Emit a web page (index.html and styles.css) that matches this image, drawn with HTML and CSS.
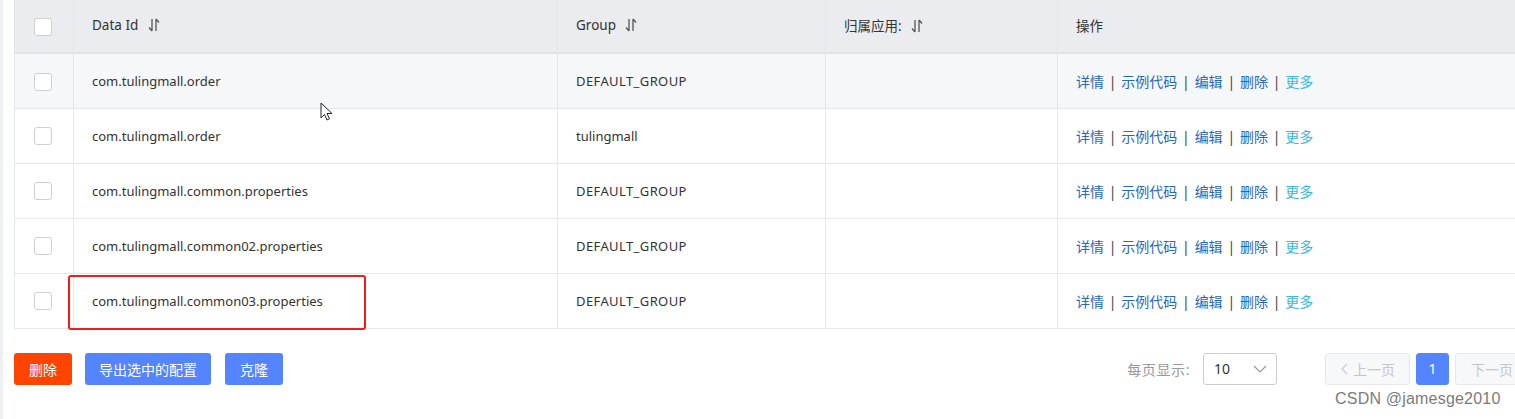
FILE: index.html
```html
<!DOCTYPE html>
<html lang="zh-CN">
<head>
<meta charset="utf-8">
<title>配置列表</title>
<link rel="stylesheet" href="styles.css">
</head>
<body>
<div class="page">
  <div class="table-wrap">
    <table class="grid">
      <colgroup>
        <col class="c-check"><col class="c-id"><col class="c-group"><col class="c-app"><col class="c-op">
      </colgroup>
      <thead>
        <tr>
          <th class="check-cell"><span class="checkbox"></span></th>
          <th>Data Id <svg class="sort" viewBox="0 0 12 14" width="12" height="14"><path d="M4 1v12M4 13L1 9.5M8 13V1M8 1l3 3.5" fill="none" stroke="#555" stroke-width="1.3"/></svg></th>
          <th>Group <svg class="sort" viewBox="0 0 12 14" width="12" height="14"><path d="M4 1v12M4 13L1 9.5M8 13V1M8 1l3 3.5" fill="none" stroke="#555" stroke-width="1.3"/></svg></th>
          <th>归属应用: <svg class="sort" viewBox="0 0 12 14" width="12" height="14"><path d="M4 1v12M4 13L1 9.5M8 13V1M8 1l3 3.5" fill="none" stroke="#555" stroke-width="1.3"/></svg></th>
          <th>操作</th>
        </tr>
      </thead>
      <tbody>
        <tr class="hover">
          <td class="check-cell"><span class="checkbox"></span></td>
          <td>com.tulingmall.order</td>
          <td class="grp">DEFAULT_GROUP</td>
          <td></td>
          <td class="ops"><a>详情</a><i>|</i><a>示例代码</a><i>|</i><a>编辑</a><i>|</i><a>删除</a><i>|</i><a class="more">更多</a></td>
        </tr>
        <tr>
          <td class="check-cell"><span class="checkbox"></span></td>
          <td>com.tulingmall.order</td>
          <td>tulingmall</td>
          <td></td>
          <td class="ops"><a>详情</a><i>|</i><a>示例代码</a><i>|</i><a>编辑</a><i>|</i><a>删除</a><i>|</i><a class="more">更多</a></td>
        </tr>
        <tr>
          <td class="check-cell"><span class="checkbox"></span></td>
          <td>com.tulingmall.common.properties</td>
          <td class="grp">DEFAULT_GROUP</td>
          <td></td>
          <td class="ops"><a>详情</a><i>|</i><a>示例代码</a><i>|</i><a>编辑</a><i>|</i><a>删除</a><i>|</i><a class="more">更多</a></td>
        </tr>
        <tr>
          <td class="check-cell"><span class="checkbox"></span></td>
          <td>com.tulingmall.common02.properties</td>
          <td class="grp">DEFAULT_GROUP</td>
          <td></td>
          <td class="ops"><a>详情</a><i>|</i><a>示例代码</a><i>|</i><a>编辑</a><i>|</i><a>删除</a><i>|</i><a class="more">更多</a></td>
        </tr>
        <tr>
          <td class="check-cell"><span class="checkbox"></span></td>
          <td class="marked">com.tulingmall.common03.properties<span class="annot"></span></td>
          <td class="grp">DEFAULT_GROUP</td>
          <td></td>
          <td class="ops"><a>详情</a><i>|</i><a>示例代码</a><i>|</i><a>编辑</a><i>|</i><a>删除</a><i>|</i><a class="more">更多</a></td>
        </tr>
      </tbody>
    </table>
    <svg class="cursor" viewBox="0 0 14 20" width="14" height="20"><path d="M1 1v15l3.5-3.5 2.5 5.5 2.5-1.2-2.5-5.3h5z" fill="#fff" stroke="#222" stroke-width="1"/></svg>
  </div>

  <div class="footer">
    <div class="actions">
      <button class="btn danger">删除</button>
      <button class="btn primary">导出选中的配置</button>
      <button class="btn primary">克隆</button>
    </div>
    <div class="pager">
      <span class="pager-label">每页显示:</span>
      <div class="select"><span>10</span><svg viewBox="0 0 14 8" width="14" height="8"><path d="M1 1l6 6 6-6" fill="none" stroke="#999" stroke-width="1.2"/></svg></div>
      <button class="pbtn prev"><svg viewBox="0 0 8 12" width="8" height="12"><path d="M7 1L2 6l5 5" fill="none" stroke="#ccc" stroke-width="1.3"/></svg>上一页</button>
      <button class="pbtn current">1</button>
      <button class="pbtn next">下一页</button>
    </div>
  </div>
  <div class="watermark">CSDN @jamesge2010</div>
</div>
</body>
</html>
```

FILE: styles.css
```css
* { box-sizing: border-box; }
html, body { margin: 0; padding: 0; background: #fff; }
body {
  font-family: "Noto Sans", "Noto Sans CJK SC", sans-serif;
  font-size: 13px;
  color: #333;
  width: 1515px;
  height: 419px;
  overflow: hidden;
}
.page {
  position: relative;
  height: 419px;
  padding-left: 11px;
  border-left: 3px solid #eef0f3;
}
.table-wrap {
  position: relative;
  width: 1520px;
}
.grid {
  border-collapse: collapse;
  table-layout: fixed;
  width: 1520px;
}
.c-check { width: 59px; }
.c-id { width: 484px; }
.c-group { width: 268px; }
.c-app { width: 232px; }
.c-op { width: 477px; }
.grid th, .grid td {
  border: 1px solid #e6e7ea;
  text-align: left;
  padding: 0 0 0 18px;
  white-space: nowrap;
}
.grid th {
  height: 53px;
  background: #ebecf0;
  font-weight: normal;
  font-size: 13.5px;
  color: #333;
  border-top: none;
  border-bottom: 2px solid #e3e4e8;
  padding-bottom: 3px;
}
.grid td { height: 55px; background: #fff; }
.grid td.grp { letter-spacing: 0.4px; }
.grid tr.hover td { background: #f6f7f9; }
.grid .check-cell { padding: 0; text-align: center; }
.checkbox {
  display: inline-block;
  width: 18px;
  height: 18px;
  border: 1px solid #cfcfcf;
  border-radius: 3px;
  background: #fff;
  vertical-align: middle;
  margin-left: -2px;
}
.sort { vertical-align: -2px; margin-left: 6px; }
.ops { font-size: 14px; }
.ops a { color: #2868b8; cursor: pointer; }
.ops a.more { color: #3bb7e0; }
.ops i { font-style: normal; color: #444; margin: 0 4.8px; }
.marked { position: relative; }
.annot {
  position: absolute;
  left: -6px;
  top: 1px;
  width: 298px;
  height: 55px;
  border: 2px solid #f21c1c;
  border-radius: 3px;
}
.cursor { position: absolute; left: 306px; top: 102px; }

.footer {
  display: flex;
  justify-content: space-between;
  align-items: center;
  margin-top: 24px;
  width: 1501px;
}
.actions { display: flex; gap: 13px; }
.btn {
  height: 32px;
  border: none;
  border-radius: 3px;
  color: #fff;
  font-family: inherit;
  font-size: 14px;
  padding: 0 14px;
}
.btn.danger { background: #ff4400; width: 58px; }
.btn.primary { background: #5584ff; }
.actions .btn:nth-child(3) { width: 58px; margin-left: 1px; }
.pager { display: flex; align-items: center; margin-right: -14px; }
.pager-label { color: #999; font-size: 14px; margin-right: 13px; letter-spacing: 0.6px; }
.select {
  width: 74px;
  height: 32px;
  border: 1px solid #ccc;
  border-radius: 3px;
  display: flex;
  align-items: center;
  justify-content: space-between;
  padding: 0 9px 0 10px;
  margin-right: 48px;
  color: #333;
  font-size: 14px;
}
.pbtn {
  height: 32px;
  border-radius: 3px;
  font-family: inherit;
  font-size: 14px;
  border: 1px solid #e6e7ea;
  background: #f7f8fa;
  color: #c4c6cc;
  display: flex;
  align-items: center;
  justify-content: center;
  gap: 5px;
}
.pbtn.prev { width: 85px; margin-right: 6px; }
.pbtn.current { width: 33px; background: #5584ff; border-color: #5584ff; color: #fff; margin-right: 6px; }
.pbtn.next { width: 74px; }
.watermark {
  position: absolute;
  left: 1332px;
  top: 390px;
  font-family: "Liberation Sans", sans-serif;
  font-size: 16px;
  color: #7b7b7b;
  text-shadow: 0 0 2px #fff, 0 0 2px #fff;
  letter-spacing: 0.2px;
}
```
